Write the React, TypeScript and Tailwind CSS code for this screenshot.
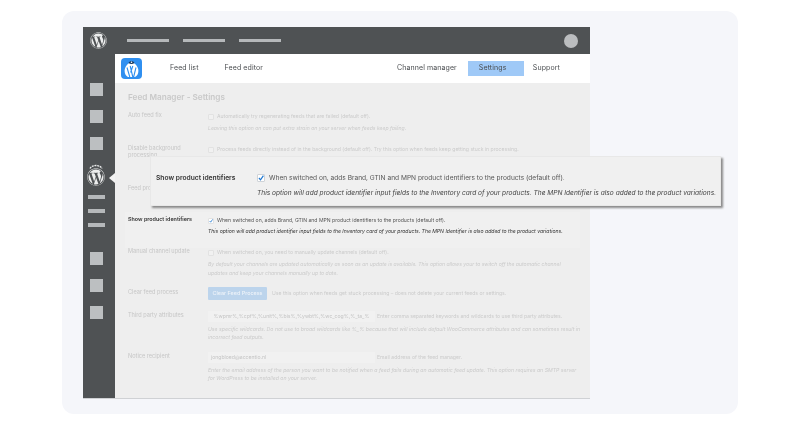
import { FaWordpress } from "react-icons/fa";

function AppLogo() {
  return (
    <svg viewBox="0 0 21 21" className="h-[21px] w-[21px] shrink-0">
      <rect width="21" height="21" rx="4" fill="#2f8ff0" />
      <path d="M10.5 4.5 C6 5 3.6 9.5 3.6 13 C3.6 16 5 18 7 19 L14 19 C16 18 17.4 16 17.4 13 C17.4 9.5 15 5 10.5 4.5Z" fill="#fff" />
      <path d="M6 9.5 L8.8 19 M9.2 8 L11.8 19 M11.8 8 L9.6 14.5 M15 9.5 L12.6 19" stroke="#2f8ff0" strokeWidth="1.1" fill="none" />
      <path d="M7.6 5 C8 2.6 13 2.6 13.4 5 C12 6.2 9 6.2 7.6 5Z" fill="#16375c" />
      <circle cx="10.5" cy="4.2" r="0.8" fill="#fff" />
    </svg>
  );
}

function Square() {
  return <div className="h-[13px] w-[13px] bg-[#bcbfc1]" />;
}

function Bar() {
  return <div className="h-[4px] w-[17px] bg-[#b5b8ba]" />;
}

function Box({ checked, big }: { checked?: boolean; big?: boolean }) {
  return (
    <span
      className={`flex shrink-0 items-center justify-center rounded-[1px] border ${
        big ? "h-[8px] w-[8px] border-[#cfd3d8] bg-white" : "h-[6px] w-[6px] border-[#e2e2e2] bg-[#f1f1f1]"
      } ${checked ? "bg-white" : ""}`}
    >
      {checked && (
        <svg viewBox="0 0 10 10" className="h-full w-full overflow-visible">
          <path d="M1.5 5 L4.2 8 L9 1" fill="none" stroke="#1f78d1" strokeWidth="2" />
        </svg>
      )}
    </span>
  );
}

function Row({ label, labelClass, children, className }: { label: React.ReactNode; labelClass?: string; children?: React.ReactNode; className?: string }) {
  return (
    <div className={`flex ${className ?? ""}`}>
      <div className={`w-[80px] shrink-0 leading-[7px] ${labelClass ?? "text-[5.6px] text-[#c6c6c6]"}`}>{label}</div>
      <div className="min-w-0 flex-1">{children}</div>
    </div>
  );
}

const Faded = "text-[5.1px] leading-[9px] text-[#cbcbcb]";
const FadedTight = "text-[5.2px] leading-[8px] text-[#cbcbcb] italic whitespace-nowrap";

export default function App() {
  return (
    <div className="h-[425px] w-[800px] overflow-hidden bg-white pl-[62px] pt-[11px] font-['Inter',sans-serif] blur-[0.3px]">
      <div className="relative h-[403px] w-[676px] rounded-[12px] bg-[#f5f6fa] pl-[21px] pt-[16px]">
        <div className="flex h-[371px] w-[507px] flex-col shadow-[0_1px_0_#cfd1d4]">
          {/* top bar */}
          <div className="flex h-[27px] shrink-0 items-center bg-[#4f5254] pl-[7px] pr-[12px]">
            <FaWordpress className="h-[17px] w-[17px] text-[#eceded]" />
            <div className="ml-[20px] flex gap-[14px]">
              <div className="h-[3px] w-[42px] bg-[#b5b8ba]" />
              <div className="h-[3px] w-[42px] bg-[#b5b8ba]" />
              <div className="h-[3px] w-[42px] bg-[#b5b8ba]" />
            </div>
            <div className="ml-auto h-[14px] w-[14px] rounded-full bg-[#bbbdbf]" />
          </div>
          <div className="flex min-h-0 flex-1">
            {/* sidebar */}
            <div className="relative flex w-[32px] shrink-0 flex-col items-center bg-[#4f5254] pr-[6px] pt-[29px]">
              <div className="flex flex-col gap-[14px]">
                <Square />
                <Square />
                <Square />
              </div>
              <div className="relative mt-[14px] h-[22px] w-[18px]">
                <svg viewBox="0 0 14 5" className="absolute left-[2px] top-0 h-[5px] w-[14px]">
                  <path d="M1 4.5 C3 0.5 11 0.5 13 4.5" fill="none" stroke="#eceded" strokeWidth="1.3" strokeDasharray="2 0.7" />
                </svg>
                <FaWordpress className="absolute left-0 top-[4px] h-[18px] w-[18px] text-[#eceded]" />
              </div>
              <div className="mt-[9px] flex flex-col gap-[10px]">
                <Bar />
                <Bar />
                <Bar />
              </div>
              <div className="mt-[25px] flex flex-col gap-[14px]">
                <Square />
                <Square />
                <Square />
              </div>
              <div className="absolute right-0 top-[119px] h-0 w-0 border-y-[5px] border-r-[6px] border-y-transparent border-r-[#f2f2f2]" />
            </div>
            <div className="flex min-w-0 flex-1 flex-col">
              {/* nav */}
              <div className="flex h-[29px] shrink-0 items-center bg-white pl-[6px] text-[7px] tracking-[0.1px] text-[#4a4d50]">
                <AppLogo />
                <span className="ml-[28px]">Feed list</span>
                <span className="ml-[26px]">Feed editor</span>
                <span className="ml-auto">Channel manager</span>
                <span className="ml-[11px] flex h-[15px] w-[56px] items-center bg-[#9fc9f7] pl-[11px]">Settings</span>
                <span className="ml-[9px] mr-[30px]">Support</span>
              </div>
              {/* content */}
              <div className="flex-1 overflow-hidden bg-[#eeeeee] pl-[13px] pr-[10px] pt-[8px]">
                <div className="text-[8.2px] font-semibold leading-[12px] text-[#c9c9c9]">Feed Manager - Settings</div>
                <Row label="Auto feed fix" className="mt-[9px]">
                  <div className={`flex items-center gap-[3px] ${Faded}`}>
                    <Box />
                    Automatically try regenerating feeds that are failed (default off).
                  </div>
                  <div className={`mt-[3px] italic ${Faded}`}>Leaving this option on can put extra strain on your server when feeds keep failing.</div>
                </Row>
                <Row label={<>Disable background<br />processing</>} className="mt-[12px] h-[40px]">
                  <div className={`flex items-center gap-[3px] ${Faded}`}>
                    <Box />
                    Process feeds directly instead of in the background (default off). Try this option when feeds keep getting stuck in processing.
                  </div>
                </Row>
                <Row label="Feed pro" className="h-[31px]" />
                <Row label="Show product identifiers" labelClass="text-[5.4px] font-semibold text-[#333]" className="-ml-[3px] -mt-[4px] h-[36px] bg-[#f0f0f0] pl-[3px] pt-[4px]">
                  <div className="flex items-center gap-[3px] text-[5.1px] leading-[9px] text-[#555]">
                    <Box checked />
                    When switched on, adds Brand, GTIN and MPN product identifiers to the products (default off).
                  </div>
                  <div className="mt-[2px] whitespace-nowrap text-[5.1px] italic leading-[9px] text-[#333]">This option will add product identifier input fields to the Inventory card of your products. The MPN Identifier is also added to the product variations.</div>
                </Row>
                <Row label="Manual channel update" className="h-[30px]">
                  <div className={`flex items-center gap-[3px] ${Faded}`}>
                    <Box />
                    When switched on, you need to manually update channels (default off).
                  </div>
                  <div className={`mt-[3px] italic ${Faded}`}>
                    By default your channels are updated automatically as soon as an update is available. This option allows your to switch off the automatic channel<br />updates and keep your channels manually up to date.
                  </div>
                </Row>
                <Row label="Clear feed process" labelClass="pt-[2px] text-[5.6px] text-[#c6c6c6]" className="mt-[9px] h-[24px]">
                  <div className={`flex items-center gap-[5px] ${Faded}`}>
                    <span className="flex h-[13px] w-[59px] items-center justify-center rounded-[1px] bg-[#bcd4ec] text-[5.4px] font-medium text-[#eef3f9]">Clear Feed Process</span>
                    Use this option when feeds get stuck processing – does not delete your current feeds or settings.
                  </div>
                </Row>
                <Row label="Third party attributes" labelClass="pt-[1px] text-[5.6px] text-[#c6c6c6]" className="h-[41px]">
                  <div className={`flex items-center gap-[2px] ${Faded}`}>
                    <span className="flex h-[11px] w-[167px] shrink-0 items-center justify-center bg-[#f1f1f1] text-[#c4c4c4]">%wpmr%,%cpf%,%unit%,%bis%,%ywbt%,%wc_cog%,%_ta_%</span>
                    <span className="whitespace-nowrap">Enter comma separated keywords and wildcards to use third party attributes.</span>
                  </div>
                  <div className={`mt-[3px] ${FadedTight}`}>Use specific wildcards. Do not use to broad wildcards like %_% because that will include default WooCommerce attributes and can sometimes result in<br />incorrect feed outputs.</div>
                </Row>
                <Row label="Notice recipient" labelClass="pt-[1px] text-[5.6px] text-[#c6c6c6]">
                  <div className={`flex items-center gap-[2px] ${Faded}`}>
                    <span className="flex h-[11px] w-[167px] shrink-0 items-center bg-[#f1f1f1] pl-[3px] text-[#c4c4c4]">jongbloed@accentio.nl</span>
                    <span className="whitespace-nowrap">Email address of the feed manager.</span>
                  </div>
                  <div className={`mt-[3px] ${FadedTight}`}>Enter the email address of the person you want to be notified when a feed fails during an automatic feed update. This option requires an SMTP server<br />for WordPress to be installed on your server.</div>
                </Row>
              </div>
            </div>
          </div>
        </div>
        {/* zoomed callout */}
        <div className="absolute left-[88px] top-[145px] flex h-[50px] w-[571px] border border-[#e8e8e8] bg-[#f0f0f0] pl-[5px] pt-[15px] shadow-[2px_2px_2px_#8a8a8a]">
          <div className="w-[101px] shrink-0 text-[6.7px] font-semibold leading-[12px] text-[#333]">Show product identifiers</div>
          <div>
            <div className="flex items-center gap-[4px] text-[6.6px] leading-[12px] text-[#555]">
              <Box checked big />
              When switched on, adds Brand, GTIN and MPN product identifiers to the products (default off).
            </div>
            <div className="mt-[3px] whitespace-nowrap text-[6.6px] italic leading-[12px] text-[#444]">This option will add product identifier input fields to the Inventory card of your products. The MPN Identifier is also added to the product variations.</div>
          </div>
        </div>
      </div>
    </div>
  );
}
